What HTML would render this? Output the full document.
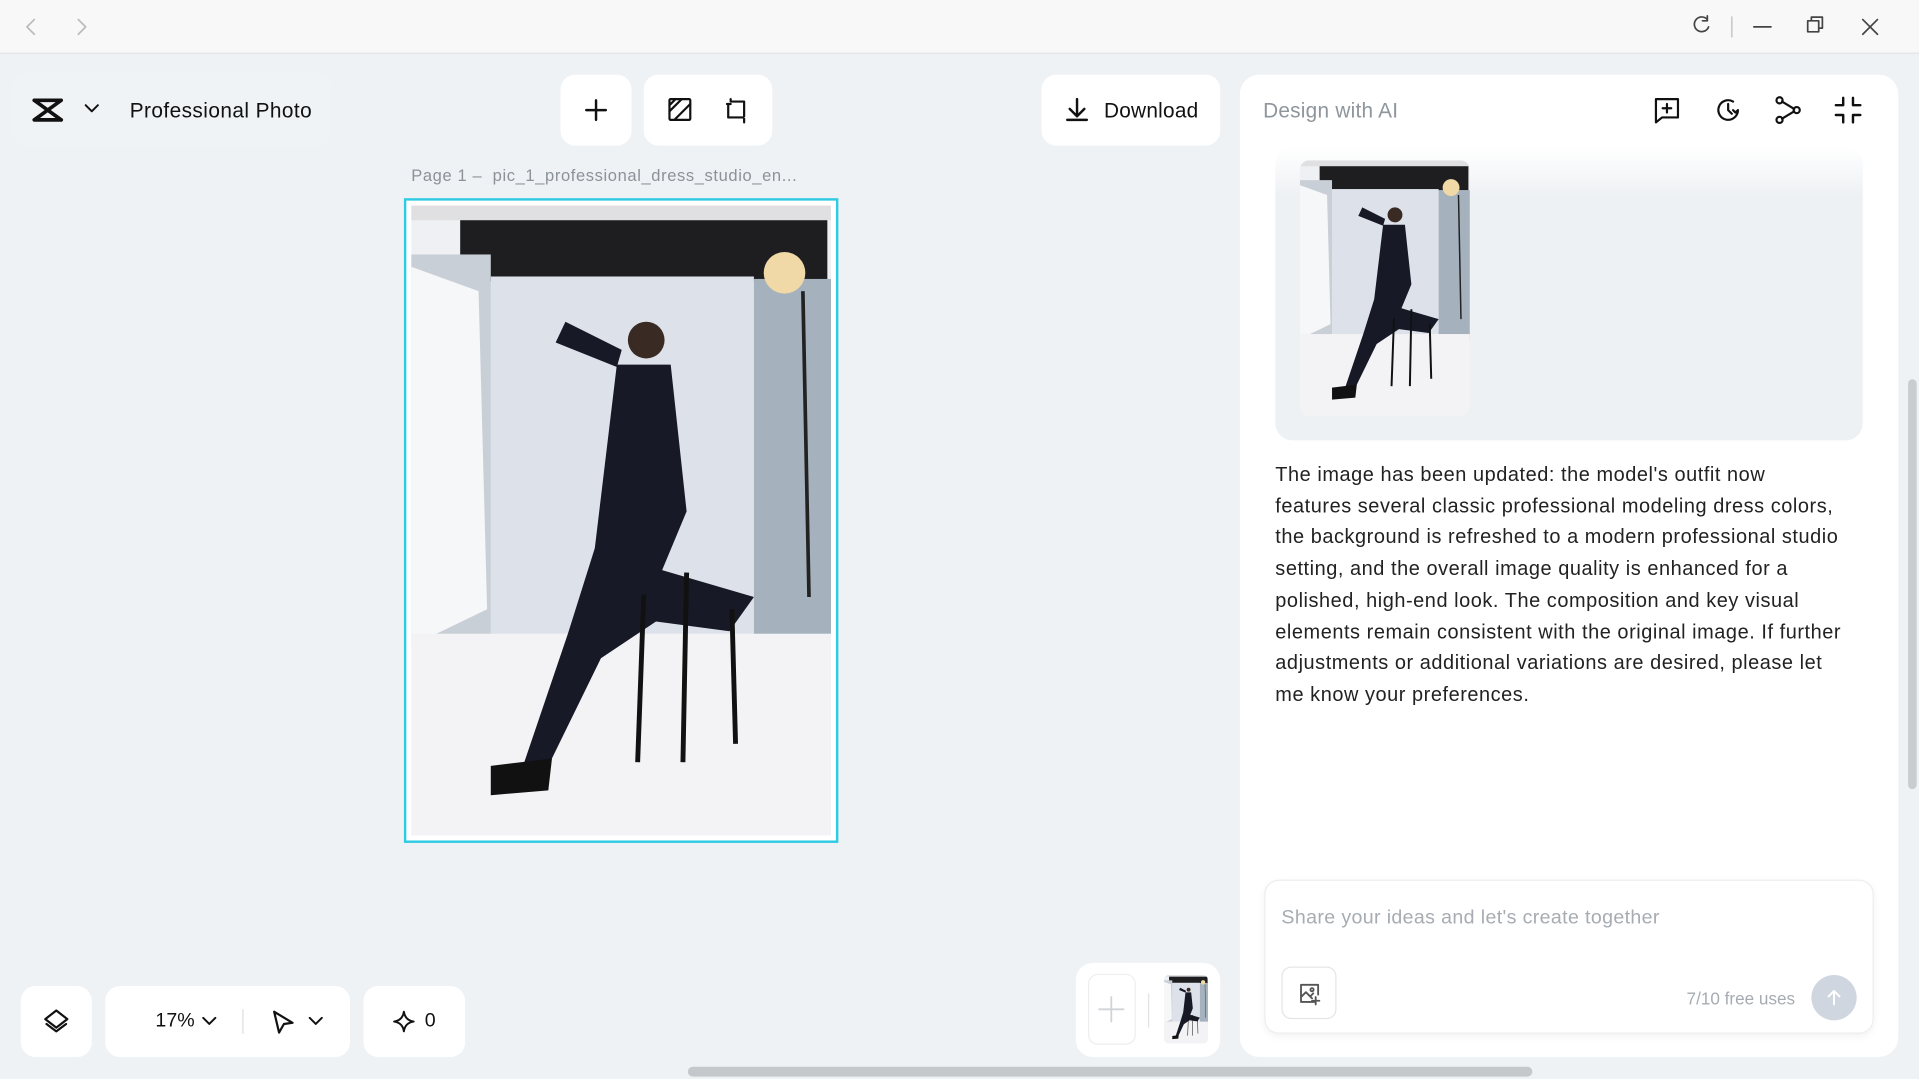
<!DOCTYPE html>
<html><head><meta charset="utf-8"><style>
*{margin:0;padding:0;box-sizing:border-box}
html,body{width:1919px;height:1079px;overflow:hidden;background:#eef2f5;font-family:"Liberation Sans",sans-serif}
#w{position:absolute;left:0;top:0;width:1568px;height:882px;transform:scale(1.2239,1.2234);transform-origin:0 0;background:#eef2f5}
.a{position:absolute}
.card{position:absolute;background:#fff;border-radius:12px}
svg.i{position:absolute;fill:none;stroke:#111;stroke-width:1.8;stroke-linecap:round;stroke-linejoin:round}
</style></head><body><div id="w">
<svg width="0" height="0" style="position:absolute"><defs>
<symbol id="ph" viewBox="0 0 343 515" preserveAspectRatio="none">
<rect width="343" height="515" fill="#eef0f4"/>
<rect x="0" y="0" width="343" height="12" fill="#e0e0e2"/>
<rect x="40" y="12" width="300" height="50" fill="#1e1e20"/>
<rect x="65" y="58" width="215" height="300" fill="#dde2ea"/>
<rect x="0" y="40" width="65" height="320" fill="#c9cfd6"/>
<polygon points="0,50 55,70 62,330 0,360" fill="#f6f7f9"/>
<rect x="280" y="60" width="63" height="300" fill="#a5b2bd"/>
<rect x="0" y="350" width="343" height="165" fill="#f3f2f5"/>
<circle cx="305" cy="55" r="17" fill="#f0d9a6"/>
<line x1="320" y1="70" x2="325" y2="320" stroke="#222" stroke-width="3"/>
<circle cx="192" cy="110" r="15" fill="#3a2a24"/>
<path d="M168 130 L212 130 L225 250 L205 298 L280 320 L260 348 L200 340 L155 370 L112 458 L90 462 L128 350 L150 280 Z" fill="#171a26"/>
<path d="M168 132 L118 112 L126 95 L172 118Z" fill="#171a26"/>
<path d="M225 300 L222 455 M190 318 L185 455 M262 330 L265 440" stroke="#111" stroke-width="4"/>
<path d="M65 458 L115 452 L112 478 L65 482Z" fill="#111"/>
</symbol></defs></svg>

<div class="a" style="left:0;top:0;width:1568px;height:44px;background:#f8f8f8;border-bottom:1px solid #e3e3e3"></div>
<svg class="i" style="left:18px;top:14px;stroke:#bbb;stroke-width:1.4" width="60" height="16"><path d="M10 2L4 8L10 14M46 2L52 8L46 14"/></svg>
<svg class="i" style="left:1380px;top:12px;stroke:#444;stroke-width:1.4" width="160" height="20"><path d="M15 4A6 6 0 1 0 16 10M15 1v4h-4"/><path d="M35 2v16" stroke="#ccc"/><path d="M53 10h14"/><path d="M97 5h9v9h-9zM100 5V2h9v9h-3"/><path d="M142 4l12 12M154 4l-12 12"/></svg>

<div class="a" style="left:10px;top:60px;width:260px;height:60px;background:#f0f3f6;border-radius:12px"></div>
<svg class="i" style="left:25px;top:78px;stroke-width:3" width="30" height="24"><path d="M3 4h22L3 20h22M3 4l22 16"/></svg>
<svg class="i" style="left:68px;top:84px;stroke-width:1.6" width="14" height="10"><path d="M2 2l5 5l5-5"/></svg>
<div class="a" style="left:106px;top:81px;font-size:17px;color:#111;letter-spacing:0.35px">Professional Photo</div>

<div class="card" style="left:458px;top:61px;width:58px;height:58px"></div>
<svg class="i" style="left:477px;top:80px;stroke-width:2" width="20" height="20"><path d="M10 2v16M2 10h16"/></svg>
<div class="card" style="left:526px;top:61px;width:105px;height:58px"></div>
<svg class="i" style="left:545px;top:79px" width="22" height="22"><rect x="2" y="2" width="17" height="17" rx="1"/><path d="M2 12L12 2M6 19L19 6M2 7L7 2"/></svg>
<svg class="i" style="left:591px;top:79px" width="22" height="22"><path d="M6 4h11v12M4 6v11h12M3 6h3M17 18v3M6 2v2"/></svg>

<div class="card" style="left:851px;top:61px;width:146px;height:58px"></div>
<svg class="i" style="left:869px;top:79px;stroke-width:2" width="22" height="22"><path d="M11 2v13M5 10l6 6l6-6M3 19h16"/></svg>
<div class="a" style="left:902px;top:81px;font-size:17px;color:#111;letter-spacing:0.2px">Download</div>

<div class="a" style="left:336px;top:136px;font-size:13.5px;color:#8b9298;letter-spacing:0.5px">Page 1 –&nbsp;&nbsp;pic_1_professional_dress_studio_en...</div>
<div class="a" style="left:330px;top:162px;width:355px;height:527px;border:2px solid #2fcbe3;background:#fff"></div>
<svg class="a" style="left:336px;top:168px" width="343" height="515"><use href="#ph"/></svg>

<div class="card" style="left:17px;top:806px;width:58px;height:58px"></div>
<svg class="i" style="left:35px;top:824px" width="22" height="22"><path d="M11 2l9 7l-9 7l-9-7z M3 13l8 6l8-6"/></svg>
<div class="card" style="left:86px;top:806px;width:200px;height:58px"></div>
<div class="a" style="left:127px;top:826px;font-size:16px;color:#111">17%</div>
<svg class="i" style="left:164px;top:830px;stroke-width:1.6" width="14" height="10"><path d="M2 2l5 5l5-5"/></svg>
<div class="a" style="left:198px;top:825px;width:1px;height:20px;background:#ddd"></div>
<svg class="i" style="left:220px;top:824px" width="22" height="22"><path d="M4 3l15 9l-7 1l-4 7z"/></svg>
<svg class="i" style="left:251px;top:830px;stroke-width:1.6" width="14" height="10"><path d="M2 2l5 5l5-5"/></svg>
<div class="card" style="left:297px;top:806px;width:83px;height:58px"></div>
<svg class="i" style="left:320px;top:825px;stroke-width:1.6" width="20" height="20"><path d="M10 2Q11 9 18 10Q11 11 10 18Q9 11 2 10Q9 9 10 2z"/></svg>
<div class="a" style="left:347px;top:826px;font-size:16px;color:#111">0</div>

<div class="card" style="left:879px;top:787px;width:118px;height:77px;border-radius:14px"></div>
<div class="a" style="left:889px;top:796px;width:39px;height:58px;border:1px solid #eceef0;border-radius:8px"></div>
<svg class="i" style="left:897px;top:814px;stroke:#d0d4d8;stroke-width:1.5" width="22" height="22"><path d="M11 1v20M1 11h20"/></svg>
<div class="a" style="left:938px;top:812px;width:1px;height:28px;background:#e3e3e3"></div>
<svg class="a" style="left:951px;top:797px;border-radius:4px" width="36" height="56"><use href="#ph"/></svg>

<div class="a" style="left:562px;top:872px;width:690px;height:8px;background:#c4c8cb;border-radius:4px"></div>
<div class="a" style="left:1559px;top:310px;width:7px;height:335px;background:#c9cdd0;border-radius:4px"></div>

<div class="card" style="left:1013px;top:61px;width:538px;height:803px;border-radius:16px"></div>
<div class="a" style="left:1032px;top:81px;font-size:17px;color:#8e959c;letter-spacing:0.2px">Design with AI</div>
<svg class="i" style="left:1350px;top:78px" width="24" height="24"><path d="M3 3h18v15H8l-5 4z M12 7v7M8.5 10.5h7"/></svg>
<svg class="i" style="left:1400px;top:78px" width="24" height="24"><path d="M20 12A8 8 0 1 1 16 5M12 7v5l3 3M20 12l-2 2l-2-2"/></svg>
<svg class="i" style="left:1449px;top:78px" width="24" height="24"><circle cx="5" cy="4" r="2.5"/><circle cx="5" cy="20" r="2.5"/><circle cx="19" cy="12" r="2.5"/><path d="M7 5l10 6M7 19l10-6"/></svg>
<svg class="i" style="left:1498px;top:78px;stroke-width:2" width="24" height="24"><path d="M8 2v6H2M16 2v6h6M8 22v-6H2M16 22v-6h6"/></svg>

<div class="a" style="left:1042px;top:120px;width:480px;height:240px;border-radius:14px;background:linear-gradient(#fff 0,#eef1f4 40px,#eef1f4)"></div>
<svg class="a" style="left:1062px;top:131px;border-radius:8px" width="139" height="209"><use href="#ph"/></svg>
<div class="a" style="left:1042px;top:376px;white-space:nowrap;font-size:16.3px;line-height:25.7px;color:#222;letter-spacing:0.45px">The image has been updated: the model's outfit now<br>features several classic professional modeling dress colors,<br>the background is refreshed to a modern professional studio<br>setting, and the overall image quality is enhanced for a<br>polished, high-end look. The composition and key visual<br>elements remain consistent with the original image. If further<br>adjustments or additional variations are desired, please let<br>me know your preferences.</div>

<div class="a" style="left:1033px;top:719px;width:498px;height:126px;border:1px solid #eceef0;border-radius:12px;background:#fff;box-shadow:0 2px 6px rgba(0,0,0,.05)"></div>
<div class="a" style="left:1047px;top:742px;font-size:16px;color:#a6acb2;letter-spacing:0.3px">Share your ideas and let's create together</div>
<div class="a" style="left:1047px;top:790px;width:45px;height:43px;border:1px solid #e3e6e9;border-radius:8px"></div>
<svg class="i" style="left:1060px;top:802px;stroke:#555;stroke-width:1.5" width="20" height="20"><path d="M14 17H3V3h14v8M3 13l4-4l5 5M11 12l2-2M15 13v6M12 16h6"/><circle cx="12" cy="7" r="1.3"/></svg>
<div class="a" style="left:1378px;top:808px;font-size:14px;color:#a6acb2">7/10 free uses</div>
<div class="a" style="left:1480px;top:797px;width:37px;height:37px;border-radius:50%;background:#cfd6df"></div>
<svg class="i" style="left:1489px;top:806px;stroke:#fff;stroke-width:1.6" width="19" height="19"><path d="M9.5 15V4M5 8.5l4.5-4.5l4.5 4.5"/></svg>
</div></body></html>
